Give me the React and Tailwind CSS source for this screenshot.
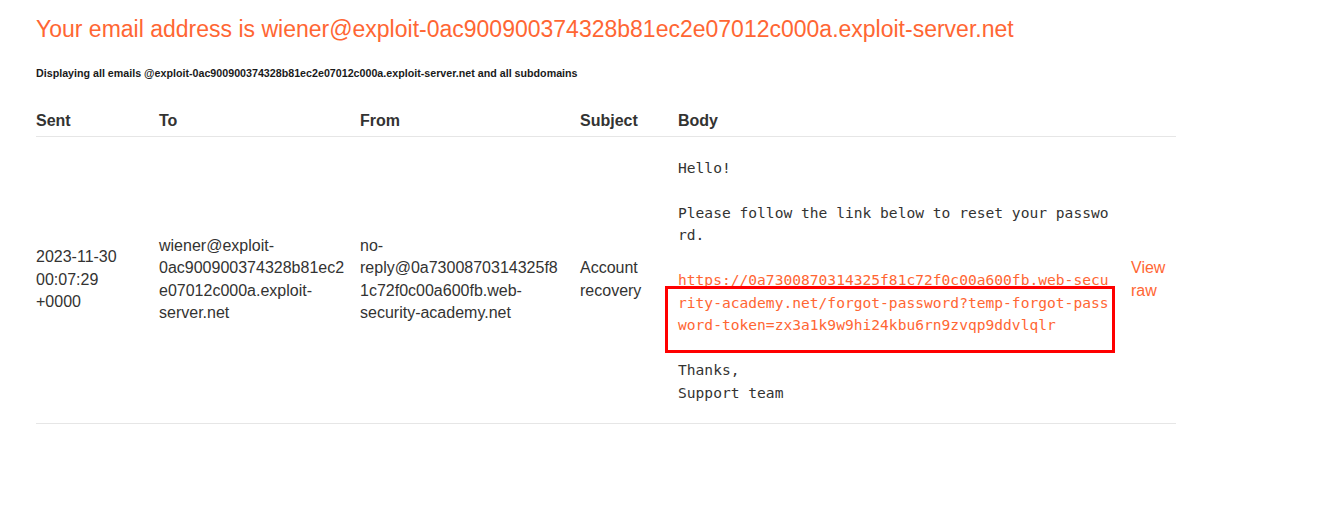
const emailAddress = "wiener@exploit-0ac900900374328b81ec2e07012c000a.exploit-server.net";

const email = {
  sent: "2023-11-30 00:07:29 +0000",
  to: "wiener@exploit-0ac900900374328b81ec2e07012c000a.exploit-server.net",
  from: "no-reply@0a7300870314325f81c72f0c00a600fb.web-security-academy.net",
  subject: "Account recovery",
  link: "https://0a7300870314325f81c72f0c00a600fb.web-security-academy.net/forgot-password?temp-forgot-password-token=zx3a1k9w9hi24kbu6rn9zvqp9ddvlqlr",
};

export default function App() {
  return (
    <div
      className="min-h-[510px] bg-white px-[36px] text-[#333332]"
      style={{ fontFamily: '"Liberation Sans", Arial, sans-serif' }}
    >
      <h1 className="pt-[13px] text-[23px] leading-[32px] text-[#ff6633]">
        Your email address is {emailAddress}
      </h1>

      <p className="mt-[21px] text-[10.7px] font-bold leading-[14px] text-[#1a1a1a]">
        Displaying all emails @exploit-0ac900900374328b81ec2e07012c000a.exploit-server.net and all subdomains
      </p>

      <table className="mt-[24px] w-[1140px] table-fixed border-collapse text-[16px] leading-[22.5px]">
        <colgroup>
          <col className="w-[123px]" />
          <col className="w-[201px]" />
          <col className="w-[220px]" />
          <col className="w-[98px]" />
          <col className="w-[453px]" />
          <col className="w-[45px]" />
        </colgroup>
        <thead>
          <tr className="border-b border-[#e6e6e6] text-left">
            <th className="pb-[3px] pt-[6px] font-bold">Sent</th>
            <th className="pb-[3px] pt-[6px] font-bold">To</th>
            <th className="pb-[3px] pt-[6px] font-bold">From</th>
            <th className="pb-[3px] pt-[6px] font-bold">Subject</th>
            <th className="pb-[3px] pt-[6px] font-bold">Body</th>
            <th className="pb-[3px] pt-[6px]"></th>
          </tr>
        </thead>
        <tbody>
          <tr className="border-b border-[#e6e6e6] align-middle">
            <td className="pr-[12px] break-words">{email.sent}</td>
            <td className="pr-[12px] [overflow-wrap:anywhere]">{email.to}</td>
            <td className="pr-[14px] [overflow-wrap:anywhere]">{email.from}</td>
            <td className="pr-[10px]">{email.subject}</td>
            <td className="pb-[19px] pt-[20px]">
              <div className="relative">
                <pre
                  className="w-[435px] whitespace-pre-wrap break-all text-[14.6px] leading-[22.5px] text-[#333332]"
                  style={{ fontFamily: '"DejaVu Sans Mono", "Liberation Mono", monospace' }}
                >
                  {"Hello!\n\nPlease follow the link below to reset your password.\n\n"}
                  <a className="text-[#ff6633]">{email.link}</a>
                  {"\n\nThanks,\nSupport team"}
                </pre>
                <div className="absolute left-[-13px] top-[129px] h-[67px] w-[450px] border-[3px] border-[#ff0000]" />
              </div>
            </td>
            <td className="text-[#ff6633]">View raw</td>
          </tr>
        </tbody>
      </table>
    </div>
  );
}
